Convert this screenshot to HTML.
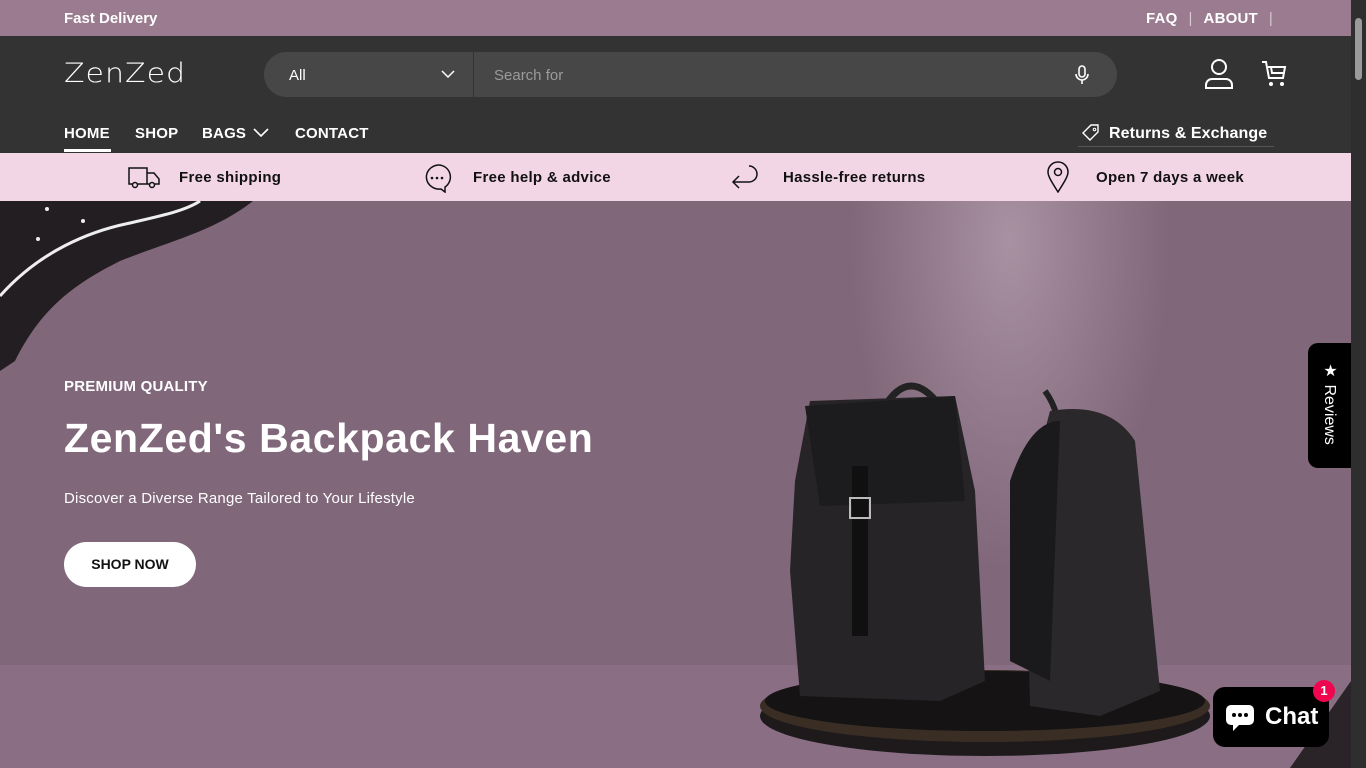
<!DOCTYPE html>
<html><head><meta charset="utf-8"><style>
*{margin:0;padding:0;box-sizing:border-box}
body{width:1366px;height:768px;overflow:hidden;font-family:"Liberation Sans",sans-serif;background:#80677a;position:relative}
.page{position:absolute;left:0;top:0;width:1351px;height:768px;overflow:hidden}
.sb{position:absolute;right:0;top:0;width:15px;height:768px;background:#2e2e2e}
.sb i{position:absolute;left:4px;top:18px;width:7px;height:62px;background:#9a9a9a;border-radius:4px}
.top{height:36px;background:#9a7b8f;color:#fff;font-weight:bold;font-size:15px;position:relative}
.top .l{position:absolute;left:64px;top:10px}
.top .r{position:absolute;left:1146px;top:10px;letter-spacing:.2px}
.top .r span{color:#d9c7d2;font-weight:normal;margin:0 11px}
.hdr{height:117px;background:#333;position:relative;color:#fff}
.logo{position:absolute;left:64px;top:20px;font-size:30px;letter-spacing:1px;font-family:"DejaVu Sans",sans-serif;font-weight:200;transform:scaleY(.9)}
.search{position:absolute;left:264px;top:16px;width:853px;height:45px;background:#474747;border-radius:23px}
.search .all{position:absolute;left:25px;top:15px;font-size:15px}
.search .div{position:absolute;left:209px;top:0;width:1px;height:45px;background:#333}
.search .ph{position:absolute;left:230px;top:15px;font-size:15px;color:#9b9b9b}
.nav{position:absolute;top:89px;left:64px;font-size:15px;font-weight:bold;letter-spacing:.2px}
.nav span{position:absolute;white-space:nowrap}
.ret{position:absolute;left:1109px;top:89px;font-size:16px;font-weight:bold;letter-spacing:.1px}
.feat{height:48px;background:#f3d6e6;position:relative;font-size:15px;font-weight:bold;color:#111;letter-spacing:.3px}
.feat span{position:absolute;top:16px}
.feat svg{position:absolute}
.hero{position:absolute;left:0;top:201px;width:1351px;height:567px;background:radial-gradient(ellipse 160px 330px at 1010px 40px,rgba(200,180,195,.55),rgba(128,103,122,0) 100%),#80677a}
.floor{position:absolute;left:0;top:464px;width:1351px;height:103px;background:#8a6e84}
.txt{position:absolute;left:64px;color:#fff}
</style></head><body><div class="page">
<div class="top"><div class="l">Fast Delivery</div><div class="r">FAQ<span>|</span>ABOUT<span>|</span></div></div>
<div class="hdr">
<div class="logo">ZenZed</div>
<div class="search"><div class="all">All</div>
<svg style="position:absolute;left:177px;top:17px" width="14" height="10" viewBox="0 0 14 10"><path d="M1 2l6 6 6-6" stroke="#fff" stroke-width="1.5" fill="none"/></svg>
<div class="div"></div><div class="ph">Search for</div>
<svg style="position:absolute;left:810px;top:13px" width="16" height="20" viewBox="0 0 16 20"><rect x="5" y="1" width="6" height="11" rx="3" stroke="#fff" stroke-width="1.6" fill="none"/><path d="M2 9a6 6 0 0 0 12 0M8 15v4" stroke="#fff" stroke-width="1.6" fill="none"/></svg></div>
<svg style="position:absolute;left:1204px;top:22px" width="30" height="32" viewBox="0 0 30 32"><circle cx="15" cy="9" r="7" stroke="#fff" stroke-width="2" fill="none"/><path d="M2 30v-3a6 6 0 0 1 6-6h14a6 6 0 0 1 6 6v3z" stroke="#fff" stroke-width="2" fill="none"/></svg>
<svg style="position:absolute;left:1261px;top:24px" width="26" height="28" viewBox="0 0 26 28"><path d="M1 2h4l3 16h14l2-11H7M10 7l1 6h11" stroke="#fff" stroke-width="2" fill="none"/><circle cx="10" cy="24" r="2" fill="#fff"/><circle cx="21" cy="24" r="2" fill="#fff"/></svg>
<div class="nav"><span style="left:0">HOME</span><span style="left:71px">SHOP</span><span style="left:138px">BAGS</span><span style="left:231px">CONTACT</span></div>
<div style="position:absolute;left:64px;top:113px;width:47px;height:3px;background:#fff"></div>
<svg style="position:absolute;left:253px;top:91px" width="16" height="10" viewBox="0 0 16 10"><path d="M1 2l7 7 7-7" stroke="#fff" stroke-width="1.6" fill="none"/></svg>
<svg style="position:absolute;left:1082px;top:88px" width="18" height="18" viewBox="0 0 18 18"><path d="M9 1h7v7l-8 8-7-7z" stroke="#fff" stroke-width="1.4" fill="none"/><circle cx="12.5" cy="5.5" r="1.3" stroke="#fff" fill="none"/></svg>
<div class="ret">Returns &amp; Exchange</div>
<div style="position:absolute;left:1078px;top:110px;width:196px;height:1px;background:#555"></div>
</div>
<div class="feat">
<svg style="left:128px;top:13px" width="32" height="24" viewBox="0 0 32 24"><path d="M1 2h18v16H1zM19 7h7l5 6v5H19" stroke="#111" stroke-width="1.5" fill="none"/><circle cx="7" cy="19" r="2.5" fill="#f3d6e6" stroke="#111" stroke-width="1.5"/><circle cx="24" cy="19" r="2.5" fill="#f3d6e6" stroke="#111" stroke-width="1.5"/></svg>
<span style="left:179px">Free shipping</span>
<svg style="left:423px;top:10px" width="30" height="30" viewBox="0 0 30 30"><path d="M15 2a13 12 0 1 0 3 24l4 3v-5A12 12 0 0 0 15 2z" stroke="#111" stroke-width="1.5" fill="none"/><circle cx="9" cy="15" r="1.3" fill="#111"/><circle cx="14" cy="15" r="1.3" fill="#111"/><circle cx="19" cy="15" r="1.3" fill="#111"/></svg>
<span style="left:473px">Free help &amp; advice</span>
<svg style="left:731px;top:10px" width="32" height="30" viewBox="0 0 32 30"><path d="M18 3a8 8 0 0 1 0 16H2M8 13l-6 6 6 6" stroke="#111" stroke-width="1.5" fill="none"/></svg>
<span style="left:783px">Hassle-free returns</span>
<svg style="left:1046px;top:8px" width="24" height="32" viewBox="0 0 24 32"><path d="M12 31C5 20 2 15 2 11a10 10 0 0 1 20 0c0 4-3 9-10 20z" stroke="#111" stroke-width="1.5" fill="none"/><circle cx="12" cy="11" r="3.5" stroke="#111" stroke-width="1.5" fill="none"/></svg>
<span style="left:1096px">Open 7 days a week</span>
</div>
<div class="hero">
<div class="floor"></div>
<svg style="position:absolute;left:0;top:0" width="260" height="170" viewBox="0 0 260 170"><path d="M0 0H253C215 30 170 40 120 60 70 85 40 110 15 160L0 170z" fill="#231e22"/><path d="M0 95C40 50 90 30 130 22 160 15 185 10 200 0" stroke="#eee" stroke-width="3" fill="none"/><circle cx="47" cy="8" r="2" fill="#eee"/><circle cx="38" cy="38" r="2" fill="#eee"/><circle cx="83" cy="20" r="2" fill="#eee"/></svg>
<svg style="position:absolute;left:1290px;top:480px" width="61" height="87" viewBox="0 0 61 87"><path d="M61 0V87H0z" fill="#2a2328"/></svg>
<div class="txt" style="top:177px;font-size:15px;font-weight:bold;letter-spacing:.2px">PREMIUM QUALITY</div>
<div class="txt" style="top:214px;font-size:41px;font-weight:bold;letter-spacing:.6px">ZenZed's Backpack Haven</div>
<div class="txt" style="top:289px;font-size:15px;letter-spacing:.2px">Discover a Diverse Range Tailored to Your Lifestyle</div>
<div style="position:absolute;left:64px;top:341px;width:132px;height:45px;background:#fff;border-radius:23px;font-size:14px;font-weight:bold;color:#111;text-align:center;line-height:45px">SHOP NOW</div>
<svg style="position:absolute;left:740px;top:170px" width="480" height="400" viewBox="0 0 480 400">
<ellipse cx="245" cy="345" rx="225" ry="40" fill="#1e1a1c"/>
<ellipse cx="245" cy="335" rx="225" ry="36" fill="#3a2e24"/>
<ellipse cx="245" cy="330" rx="220" ry="30" fill="#151314"/>
<path d="M145 35q25-40 55 0" stroke="#222" stroke-width="7" fill="none"/>
<path d="M70 30L215 25 235 120 245 310 200 330 60 325 50 200 55 110z" fill="#262426"/>
<path d="M65 35L215 25 225 130 80 135z" fill="#1c1b1d"/>
<rect x="112" y="95" width="16" height="170" fill="#101010"/>
<rect x="110" y="127" width="20" height="20" fill="none" stroke="#bbb" stroke-width="2"/>
<path d="M305 20q15 20 18 60" stroke="#222" stroke-width="6" fill="none"/>
<path d="M310 40q60-10 85 30l25 250-60 25-70-10-5-200z" fill="#2a282b"/>
<path d="M270 110q20-60 50-60l-10 260-40-20z" fill="#1a191b"/>
</svg>
<div style="position:absolute;left:1308px;top:142px;width:43px;height:125px;background:#000;border-radius:10px 0 0 10px"></div>
<div style="position:absolute;left:1320px;top:160px;color:#fff;font-size:16px;writing-mode:vertical-rl">★ Reviews</div>
<div style="position:absolute;left:1213px;top:486px;width:116px;height:60px;background:#000;border-radius:12px;color:#fff;font-weight:bold;font-size:24px">
<svg style="position:absolute;left:12px;top:16px" width="30" height="30" viewBox="0 0 30 30"><path d="M6 2h18a5 5 0 0 1 5 5v10a5 5 0 0 1-5 5H14l-6 6v-6H6a5 5 0 0 1-5-5V7a5 5 0 0 1 5-5z" fill="#fff"/><circle cx="9" cy="12" r="2" fill="#000"/><circle cx="15" cy="12" r="2" fill="#000"/><circle cx="21" cy="12" r="2" fill="#000"/></svg>
<span style="position:absolute;left:52px;top:16px">Chat</span></div>
<div style="position:absolute;left:1313px;top:479px;width:22px;height:22px;border-radius:50%;background:#f0064f;color:#fff;font-size:13px;font-weight:bold;text-align:center;line-height:22px">1</div>
</div>
</div><div class="sb"><i></i></div></body></html>
